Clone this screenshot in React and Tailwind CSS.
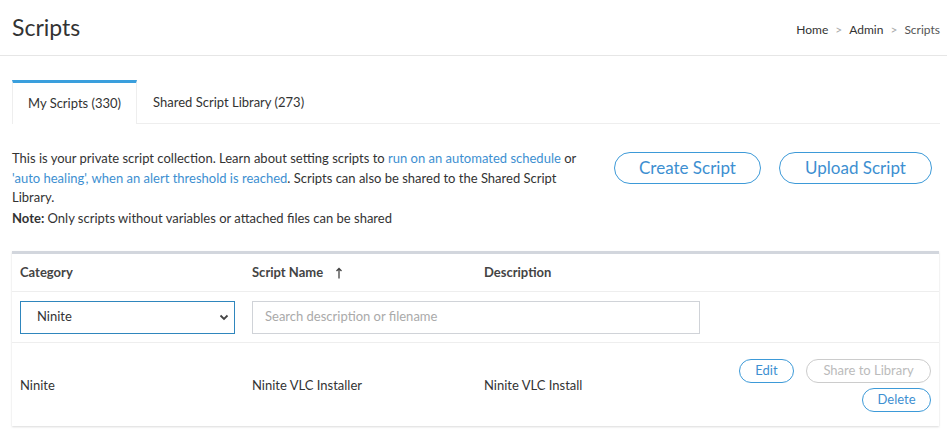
import React from "react";

const font = { fontFamily: "Lato, 'Open Sans', sans-serif" };

export default function App() {
  return (
    <div className="w-[947px] h-[440px] bg-white text-[#333] overflow-hidden" style={font}>
      <div className="h-[56px] flex items-center justify-between pl-3 pr-[7px] border-b border-[#e6e6e6]">
        <h1 className="text-[23px] text-[#333] font-normal">Scripts</h1>
        <div className="flex items-center text-[12px] text-[#333] gap-[7px] pt-[4px]">
          <span>Home</span>
          <span className="text-[#aaa]">&gt;</span>
          <span>Admin</span>
          <span className="text-[#aaa]">&gt;</span>
          <span className="text-[#555]">Scripts</span>
        </div>
      </div>

      <div className="pl-3 pr-[7px]">
        <div className="mt-[24px] flex border-b border-[#eeeeee] h-[44px]">
          <div className="border-t-[3px] border-t-[#3a9fdd] border-x border-x-[#eeeeee] bg-white px-[15px] flex items-center text-[13px] text-[#333] -mb-px">
            My Scripts (330)
          </div>
          <div className="px-4 flex items-center text-[13px] text-[#333] pt-[3px]">
            Shared Script Library (273)
          </div>
        </div>

        <div className="mt-[25px] flex justify-between">
          <div className="w-[585px] text-[13px] leading-[19.5px] text-[#333]">
            This is your private script collection. Learn about setting scripts to{" "}
            <span className="text-[#3d8fd1]">run on an automated schedule</span> or{" "}
            <span className="text-[#3d8fd1]">'auto healing', when an alert threshold is reached</span>. Scripts can also be shared to the Shared Script Library.
            <div className="mt-[1px]">
              <span className="font-bold">Note:</span> Only scripts without variables or attached files can be shared
            </div>
          </div>
          <div className="flex gap-[18px] pt-[3px] pr-[8px]">
            <button className="h-[32px] w-[147px] rounded-full border border-[#3d9ad8] text-[#3d8fd1] text-[17px]">Create Script</button>
            <button className="h-[32px] w-[153px] rounded-full border border-[#3d9ad8] text-[#3d8fd1] text-[17px]">Upload Script</button>
          </div>
        </div>

        <div className="mt-[23px] mr-[1px] border-t-[3px] border-[#d2d6dd] shadow-[0_1px_2px_rgba(0,0,0,0.15)]">
          <div className="grid grid-cols-[232px_232px_1fr] h-[38px] items-center px-2 text-[13px] font-bold text-[#444] border-b border-[#eeeeee] pt-[1px]">
            <div>Category</div>
            <div className="flex items-center gap-[10px]">
              Script Name
              <svg width="8" height="12" viewBox="0 0 8 12" className="ml-[2px]"><path d="M4 1.5V11.5M1.5 4L4 1.5L6.5 4" stroke="#444" strokeWidth="1.3" fill="none" /></svg>
            </div>
            <div>Description</div>
          </div>
          <div className="flex items-center h-[51px] px-2 gap-[17px] border-b border-[#eeeeee]">
            <div className="w-[215px] h-[33px] border border-[#2f86bd] flex items-center justify-between pl-[16px] pr-[5px] text-[13px] text-[#333]">
              <span>Ninite</span>
              <svg width="10" height="7" viewBox="0 0 10 7"><path d="M1.5 1.5L5 5L8.5 1.5" stroke="#444" strokeWidth="1.8" fill="none" /></svg>
            </div>
            <div className="w-[448px] h-[33px] border border-[#d0d3d8] flex items-center pl-[12px] text-[13px] text-[#aaa]">
              Search description or filename
            </div>
          </div>
          <div className="flex items-center h-[83px] px-2 pt-[2px] text-[13px] text-[#333]">
            <div className="w-[232px]">Ninite</div>
            <div className="w-[232px]">Ninite VLC Installer</div>
            <div>Ninite VLC Install</div>
            <div className="ml-auto flex flex-col items-end gap-[5px] pr-[0px]">
              <div className="flex gap-[12px]">
                <button className="h-[24px] w-[55px] rounded-full border border-[#3d9ad8] text-[#3d8fd1] text-[13px]">Edit</button>
                <button className="h-[24px] w-[125px] rounded-full border border-[#cccccc] text-[#bbbbbb] text-[13px]">Share to Library</button>
              </div>
              <button className="h-[24px] w-[69px] rounded-full border border-[#3d9ad8] text-[#3d8fd1] text-[13px]">Delete</button>
            </div>
          </div>
        </div>
      </div>
    </div>
  );
}
